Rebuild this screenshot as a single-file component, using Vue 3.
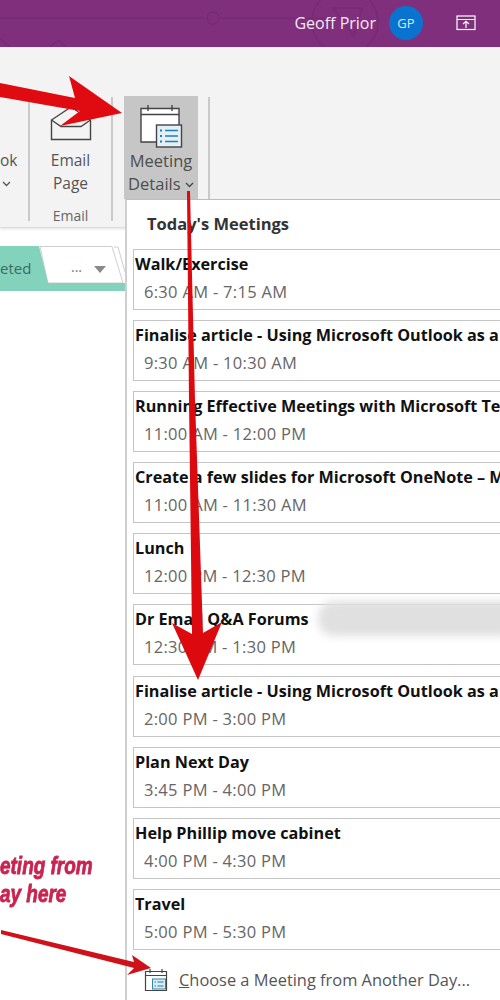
<script setup>
const meetings = [
  { title: 'Walk/Exercise', time: '6:30 AM - 7:15 AM' },
  { title: 'Finalise article - Using Microsoft Outlook as a', time: '9:30 AM - 10:30 AM' },
  { title: 'Running Effective Meetings with Microsoft Te', time: '11:00 AM - 12:00 PM' },
  { title: 'Create a few slides for Microsoft OneNote – M', time: '11:00 AM - 11:30 AM' },
  { title: 'Lunch', time: '12:00 PM - 12:30 PM' },
  { title: 'Dr Email Q&A Forums', time: '12:30 PM - 1:30 PM' },
  { title: 'Finalise article - Using Microsoft Outlook as a', time: '2:00 PM - 3:00 PM' },
  { title: 'Plan Next Day', time: '3:45 PM - 4:00 PM' },
  { title: 'Help Phillip move cabinet', time: '4:00 PM - 4:30 PM' },
  { title: 'Travel', time: '5:00 PM - 5:30 PM' }
]
</script>

<template>
  <div class="page">
    <header class="titlebar">
      <svg class="pattern" width="500" height="47" viewBox="0 0 500 47" fill="none" stroke="#6f2a6d" stroke-width="1.500">
        <circle cx="213" cy="18" r="6" />
        <path d="M0 18H205M221 18H330M0 38L10 47M50 47L58 40L66 47" />
        <circle cx="345" cy="22" r="33" />
        <path d="M333 8H362L354 36Z" />
      </svg>
      <span class="user">Geoff Prior</span>
      <span class="avatar">GP</span>
      <svg class="share" width="20" height="16" viewBox="0 0 20 16" fill="none" stroke="#fff" stroke-width="1.2">
        <rect x="1" y="1" width="18" height="13.5" />
        <path d="M1 4.5H19M10 13V6.5M7 9L10 6.2L13 9" />
      </svg>
    </header>

    <section class="ribbon">
      <div class="group outlook">
        <div class="label">ok</div>
        <svg class="chev" width="9" height="6" viewBox="0 0 9 6" fill="none" stroke="#555" stroke-width="1.300"><path d="M1 1L4.500 4.500L8 1" /></svg>
      </div>
      <div class="group email">
        <svg class="mail" width="42" height="36" viewBox="0 0 42 36" fill="none" stroke="#444" stroke-width="1.4">
          <path d="M1.5 15L21 2L40.5 15V34.5H1.5Z" />
          <path d="M1.5 15L11 21.5H31L40.5 15" />
        </svg>
        <div class="label">Email<br />Page</div>
        <div class="caption">Email</div>
      </div>
      <div class="group details">
        <div class="active">
          <svg class="cal" width="46" height="46" viewBox="0 0 46 46" fill="none">
            <path d="M3 5.5H41V39H3Z" stroke="#444" stroke-width="1.4" fill="#fff" />
            <path d="M3 11.5H41M10 2V8M34 2V8" stroke="#444" stroke-width="1.4" />
            <rect x="18.500" y="22" width="25" height="22" fill="#e4f0f6" stroke="#444" stroke-width="1.4" />
            <path d="M22 27.500H24M22 33H24M22 38.500H24" stroke="#1f7fb0" stroke-width="2" />
            <path d="M27 27.500H40M27 33H40M27 38.500H40" stroke="#1f7fb0" stroke-width="1.3" />
          </svg>
          <div class="label">Meeting</div>
          <div class="label">Details <svg class="chev-inline" width="9" height="6" viewBox="0 0 9 6" fill="none" stroke="#444" stroke-width="1.300"><path d="M1 1L4.500 4.500L8 1" /></svg></div>
        </div>
      </div>
    </section>

    <div class="tabs">
      <svg class="tab-shape" width="125" height="45" viewBox="0 0 125 45">
        <path d="M40 0.500H112L123 37H48Z" fill="#fff" stroke="#cfcfcf" />
        <path d="M114 1L118 1L125 26" fill="none" stroke="#cfcfcf" />
        <path d="M0 0H39L48 37H125V45H0Z" fill="#82d2bc" />
      </svg>
      <span class="tab-label">eted</span>
      <span class="dots">...</span>
      <span class="tri"></span>
    </div>

    <aside class="menu">
      <h2>Today's Meetings</h2>
      <div class="list">
        <div v-for="m in meetings" :key="m.time" class="row">
          <div class="title">{{ m.title }}</div>
          <div class="time">{{ m.time }}</div>
        </div>
      </div>
      <div class="choose">
        <svg width="24" height="24" viewBox="0 0 24 24" fill="none">
          <path d="M1.500 3.500H22.500V22.500H1.500Z" stroke="#444" stroke-width="1.2" />
          <path d="M1.500 7.500H22.500M6 1V5M18 1V5" stroke="#444" stroke-width="1.2" />
          <rect x="8.500" y="11" width="13" height="10" fill="#d9ecf4" stroke="#2f86a8" />
          <path d="M10.500 14H12M10.500 18H12M13.500 14H19.500M13.500 18H19.500" stroke="#1f7fb0" stroke-width="1.200" />
        </svg>
        <span><u>C</u>hoose a Meeting from Another Day...</span>
      </div>
    </aside>

    <div class="note">
      <div>eting from</div>
      <div>ay here</div>
    </div>

    <div class="blur"></div>

    <svg class="arrows" width="500" height="1000" viewBox="0 0 500 1000">
      <path fill="#e00b10" d="M0 83L75 98L69 76L122 113L60 126L80 111L0 97Z" />
      <path fill="#dc090f" d="M187 191H190L195 400L203 633L222 622L198 680L172 623L192 634L189 400Z" />
      <path fill="#cf1119" d="M1 930L134 962L132 955L151 968L127 975L134 968L1 934Z" />
    </svg>
  </div>
</template>

<style>
html, body { margin: 0; background: #fff; }
</style>

<style scoped>
.page {
  position: relative;
  width: 500px;
  height: 1000px;
  overflow: hidden;
  background: #fff;
  font-family: "Open Sans", "Noto Sans", sans-serif;
  color: #444;
}
.titlebar {
  position: relative;
  height: 47px;
  background: #7f2f7c;
  display: flex;
  align-items: center;
  justify-content: flex-end;
  box-sizing: border-box;
  padding: 0 24px 2px 0;
  color: #f6e9f6;
  overflow: hidden;
}
.pattern { position: absolute; left: 0; top: 0; opacity: .6; }
.user { position: relative; font-size: 16px; margin-right: 13px; }
.avatar {
  position: relative;
  width: 34px;
  height: 34px;
  border-radius: 50%;
  background: #0a73cf;
  color: #d5ecff;
  font-size: 13px;
  display: flex;
  align-items: center;
  justify-content: center;
  margin-right: 33px;
}
.share { position: relative; flex: none; }
.ribbon {
  height: 181px;
  box-sizing: border-box;
  background: #f3f3f3;
  border-bottom: 1px solid #dcdcdc;
  box-shadow: 0 1px 3px rgba(0, 0, 0, .12);
  display: flex;
  padding-top: 50px;
}
.group {
  height: 124px;
  box-sizing: border-box;
  border-right: 2px solid #c9c9c9;
  position: relative;
  text-align: center;
}
.outlook { width: 30px; }
.outlook .label { text-align: left; padding: 52px 0 0 0; }
.outlook .chev { display: block; margin: 9px 0 0 2px; }
.email { width: 83px; }
.mail { display: block; margin: 8px auto 8px; }
.label { font-size: 15.500px; line-height: 23px; color: #555; }
.caption { position: absolute; left: 0; right: 0; top: 109px; font-size: 14px; color: #666; line-height: 20px; }
.details { width: 97px; padding: 0 0 0 11px; height: 105px; }
.active { width: 74px; height: 103px; background: #c6c6c6; margin-top: -1px; }
.active .label { font-size: 16.500px; white-space: nowrap; color: #4d4d4d; }
.cal { display: block; margin: 0 auto; padding-top: 7px; height: 46px; }
.chev-inline { vertical-align: 2px; }
.tabs {
  position: absolute;
  left: 0;
  top: 246px;
  width: 125px;
  height: 45px;
}
.tab-shape { display: block; }
.tab-label {
  position: absolute;
  left: 0;
  top: 11px;
  font-size: 15px;
  line-height: 22px;
  color: #3f6a62;
}
.dots {
  position: absolute;
  left: 71px;
  top: 11px;
  font-size: 14px;
  line-height: 20px;
  color: #777;
}
.tri {
  position: absolute;
  left: 94px;
  top: 20px;
  border-left: 6.500px solid transparent;
  border-right: 6.500px solid transparent;
  border-top: 7px solid #8a8a8a;
}
.menu {
  position: absolute;
  left: 125px;
  top: 199px;
  width: 375px;
  height: 801px;
  box-sizing: border-box;
  background: #fff;
  border-top: 1px solid #bdbdbd;
  border-left: 2px solid #cfcfcf;
  padding: 0 0 0 6px;
  overflow: hidden;
}
.menu h2 {
  margin: 0;
  height: 49px;
  box-sizing: border-box;
  padding: 13px 0 0 14px;
  font-size: 16.500px;
  line-height: 22px;
  font-weight: 700;
  color: #333;
}
.list { display: flex; flex-direction: column; gap: 10.100px; }
.row {
  width: 380px;
  height: 61px;
  box-sizing: border-box;
  border: 1px solid #c5c5c5;
  padding: 3px 0 0 1px;
  overflow: hidden;
}
.title {
  font-size: 16.200px;
  font-weight: 700;
  line-height: 22px;
  color: #111;
  white-space: nowrap;
}
.time {
  font-size: 16.500px;
  letter-spacing: .3px;
  line-height: 22px;
  margin-top: 6px;
  padding-left: 9px;
  color: #666;
  white-space: nowrap;
}
.choose {
  display: flex;
  align-items: center;
  gap: 11px;
  margin: 18px 0 0 11px;
  font-size: 16.400px;
  color: #555;
  white-space: nowrap;
}
.note {
  position: absolute;
  left: 0;
  top: 852px;
  font-family: "Liberation Sans", sans-serif;
  font-size: 24px;
  line-height: 28px;
  font-weight: 700;
  font-style: italic;
  color: #c9234f;
  white-space: nowrap;
  -webkit-text-stroke: .8px #c9234f;
  transform: scaleX(.79);
  transform-origin: left;
}
.blur {
  position: absolute;
  left: 318px;
  top: 601px;
  width: 204px;
  height: 35px;
  border-radius: 16px;
  background: #e0e0e0;
  filter: blur(4px);
}
.arrows {
  position: absolute;
  left: 0;
  top: 0;
  pointer-events: none;
}
</style>
